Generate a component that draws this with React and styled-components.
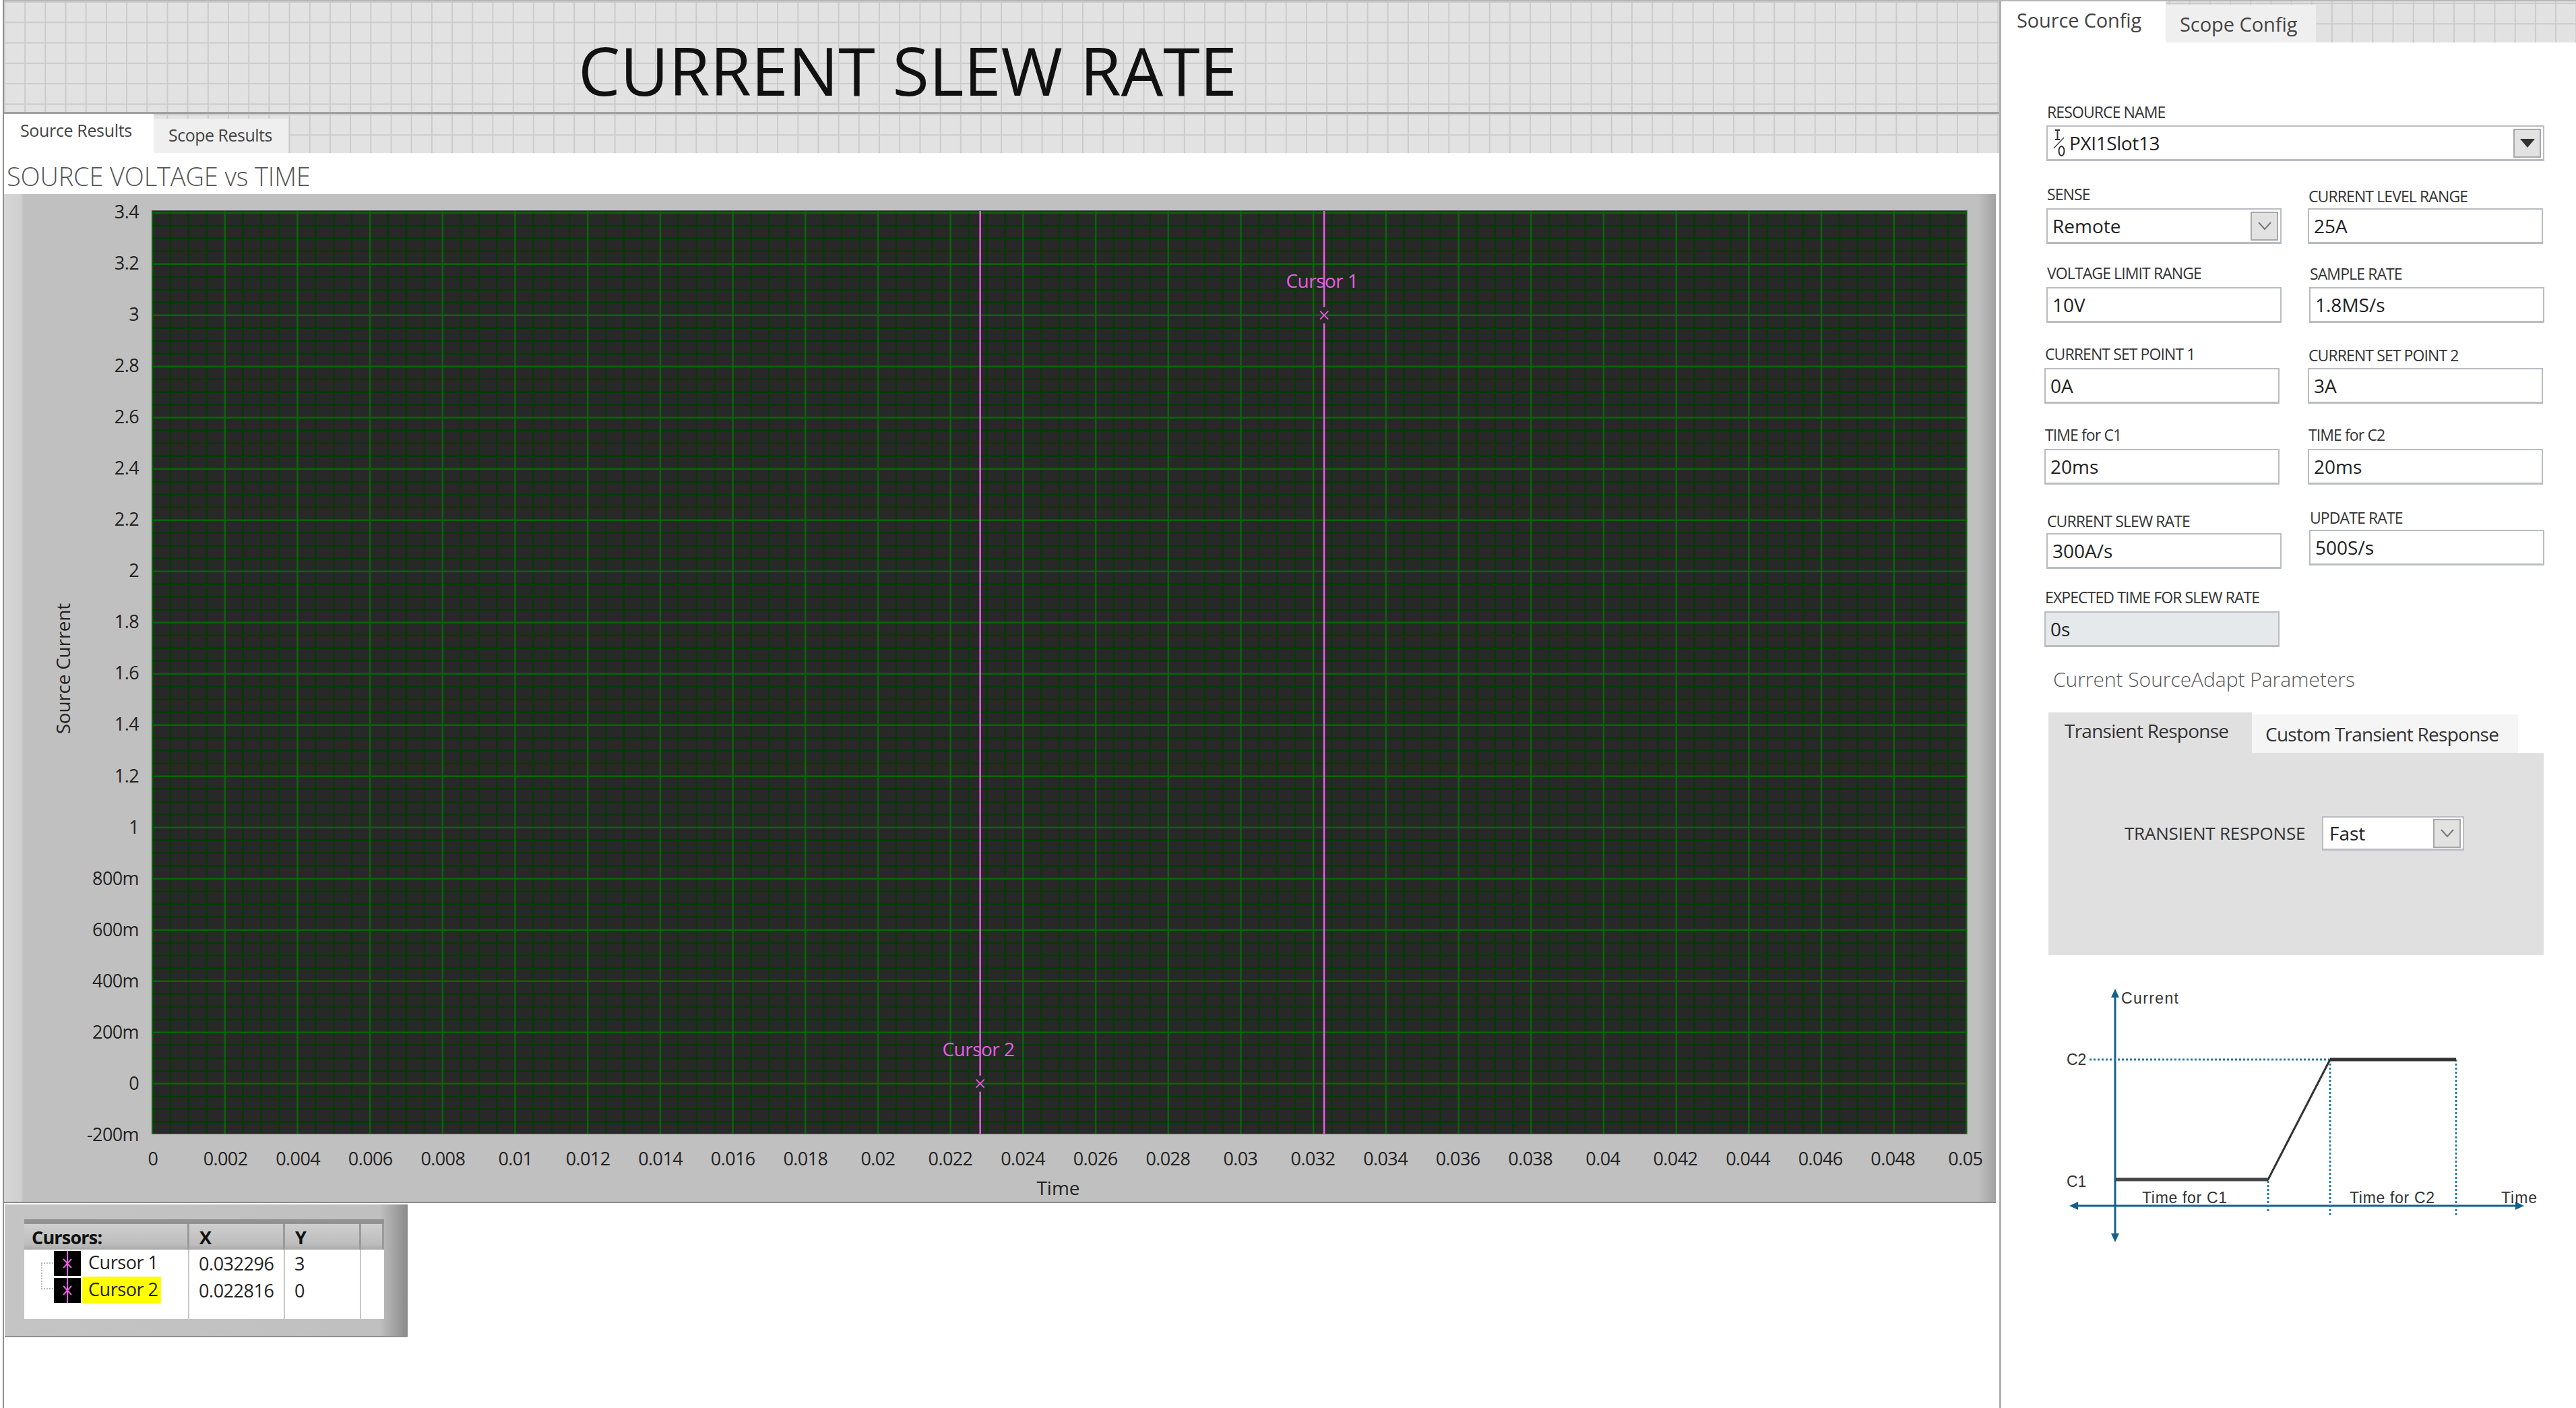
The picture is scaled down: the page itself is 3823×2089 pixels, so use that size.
import React from 'react'
import styled, { createGlobalStyle } from 'styled-components'

const GlobalStyle = createGlobalStyle`
    html, body {
        margin: 0;
        padding: 0;
        background: #fff;
    }
    body {
        font-family: "Open Sans", "Liberation Sans", sans-serif;
        color: #222;
        overflow: hidden;
    }
`

const gridPaper = `
    background-color: #e2e2e2;
    background-image:
        linear-gradient(90deg, #cbcbcb 2px, transparent 2px),
        linear-gradient(#cbcbcb 2px, transparent 2px);
    background-size: 30.2px 30.3px;
`

const Page = styled.div`
    width: 3823px;
    height: 2089px;
    display: flex;
    background: #fff;
    overflow: hidden;
`

const LeftPane = styled.div`
    width: 2961px;
    margin-left: 4px;
    border-left: 2px solid #8f8f8f;
    display: flex;
    flex-direction: column;
`

const Divider = styled.div`
    width: 3px;
    background: #b0b0b0;
`

const RightPane = styled.div`
    width: 853px;
    display: flex;
    flex-direction: column;
`

const Header = styled.div`
    border-top: 2px solid #b5b5b5;
    border-bottom: 3px solid #a0a0a0;
    box-sizing: border-box;
    height: 169px;
    display: flex;
    align-items: center;
    padding: 40px 0 0 852px;
    ${gridPaper}
`

const Title = styled.h1`
    margin: 0;
    font-size: 99px;
    font-weight: 400;
    letter-spacing: 0;
    line-height: 110px;
    color: #111;
`

const TabStrip = styled.div`
    height: ${props => props.$h}px;
    display: flex;
    align-items: flex-end;
    ${gridPaper}
`

const Tab = styled.div`
    width: ${props => props.$w}px;
    height: ${props => props.$active ? props.$h : props.$h - props.$drop}px;
    box-sizing: border-box;
    padding-left: ${props => props.$pl}px;
    padding-bottom: ${props => props.$pb}px;
    display: flex;
    align-items: center;
    font-size: ${props => props.$fs}px;
    letter-spacing: ${props => props.$ls}px;
    color: #444;
    background: ${props => props.$active ? '#fff' : '#efefef'};
`

const ChartHeading = styled.div`
    height: 61px;
    box-sizing: border-box;
    padding: 7px 0 0 4px;
    display: flex;
    align-items: center;
    font-size: 38px;
    font-weight: 300;
    letter-spacing: -0.15px;
    color: #555;
`

const GraphPanel = styled.div`
    height: 1497px;
    margin-right: 5px;
    box-sizing: border-box;
    border-bottom: 2px solid #8a8a8a;
    display: grid;
    grid-template-columns: 219px 2695px 1fr;
    grid-template-rows: 24px 1371px 1fr;
    background:
        linear-gradient(90deg, transparent 2930px, #a2a2a2 100%),
        linear-gradient(90deg, #d6d6d6 0, #d0d0d0 25px, #c0c0c0 29px);
`

const LeftAxis = styled.div`
    grid-column: 1;
    grid-row: 2;
    display: flex;
    min-height: 0;
`

const AxisTitle = styled.div`
    margin-left: 72px;
    margin-bottom: 10px;
    width: 30px;
    align-self: center;
    writing-mode: vertical-rl;
    transform: rotate(180deg);
    text-align: center;
    font-size: 28px;
    letter-spacing: -0.25px;
    line-height: 30px;
    color: #222;
`

const YTicks = styled.div`
    flex: 1;
    margin-top: -13px;
    margin-bottom: -15px;
    padding-right: 19px;
    display: flex;
    flex-direction: column;
    justify-content: space-between;
    align-items: flex-end;
`

const TickLabel = styled.div`
    height: 30px;
    line-height: 30px;
    font-size: 27px;
    letter-spacing: -0.6px;
    color: #222;
    text-align: ${props => props.$center ? 'center' : 'right'};
    width: ${props => props.$center ? '100px' : 'auto'};
`

const Plot = styled.div`
    grid-column: 2;
    grid-row: 2;
    position: relative;
    background: #282828;
    border-top: 1px solid #555;
    box-sizing: border-box;
    border-right: 1px solid #777;
    border-bottom: 1px solid #777;
    overflow: hidden;
`

const PlotSvg = styled.svg`
    display: block;
    width: 2695px;
    height: 1371px;
`

const CursorTag = styled.div`
    position: absolute;
    transform: translate(-50%, -50%);
    font-size: 28px;
    letter-spacing: -0.5px;
    line-height: 30px;
    white-space: nowrap;
    color: #e55ee0;
`

const BottomAxis = styled.div`
    grid-column: 2;
    grid-row: 3;
    display: flex;
    flex-direction: column;
    align-items: center;
`

const XTicks = styled.div`
    align-self: stretch;
    margin: 21px -47px 0 -48px;
    display: flex;
    justify-content: space-between;
`

const XTitle = styled.div`
    margin-top: 13px;
    margin-right: 4px;
    font-size: 28px;
    line-height: 30px;
    color: #222;
`

const CursorPanel = styled.div`
    width: 598px;
    height: 197px;
    margin: 2px 0 0 1px;
    box-sizing: border-box;
    padding: 29px 35px 27px 29px;
    background: linear-gradient(90deg, #c4c4c4 0, #c0c0c0 93%, #8a8a8a 100%);
    border-bottom: 2px solid #909090;
`

const CursorTable = styled.div`
    height: 141px;
    display: grid;
    grid-template-columns: 245px 142px 113px 34px;
    grid-template-rows: 38px 1fr;
    background: #fff;
    box-shadow: 0 -7px 0 #929292;
`

const HeadCell = styled.div`
    box-sizing: border-box;
    padding-left: ${props => props.$pl}px;
    border-right: 3px solid #9a9a9a;
    display: flex;
    align-items: center;
    font-size: 27px;
    font-weight: 700;
    letter-spacing: -0.8px;
    color: #111;
    background: linear-gradient(#cfcfcf, #bcbcbc 80%, #a8a8a8);
`

const BodyCol = styled.div`
    box-sizing: border-box;
    padding: 0 0 0 ${props => props.$pl}px;
    border-right: ${props => props.$last ? 'none' : '2px solid #c8c8c8'};
    display: flex;
    flex-direction: column;
    position: relative;
`

const CursorRow = styled.div`
    height: 40px;
    display: flex;
    align-items: center;
    font-size: 27px;
    letter-spacing: -0.45px;
    color: #222;
`

const Swatch = styled.svg`
    width: 40px;
    height: 37px;
    flex: none;
    background: #000;
`

const CursorName = styled.span`
    margin-left: 2px;
    padding: 0 4px 0 9px;
    height: 40px;
    line-height: 38px;
    background: ${props => props.$on ? '#ffff00' : 'transparent'};
`

const TreeLine = styled.div`
    position: absolute;
    left: 25px;
    top: 19px;
    width: 18px;
    height: 40px;
    box-sizing: border-box;
    border: 2px dotted #bbb;
    border-right: none;
`

const ConfigTabs = styled(TabStrip)`
    background-position: 7px 2px;
    border-top: 2px solid #b5b5b5;
    box-sizing: content-box;
`

const FormGrid = styled.div`
    margin: 92px 0 0 64px;
    display: grid;
    grid-template-columns: 391px 351px;
    grid-template-rows: 84px 123px 117px 120px 120px 125px 116px;
    align-items: end;
`

const Field = styled.div`
    grid-column: ${props => props.$span ? '1 / 3' : 'auto'};
    margin-left: ${props => props.$dx || 0}px;
    margin-bottom: ${props => props.$lift || 0}px;
`

const FieldLabel = styled.div`
    height: 22px;
    line-height: 22px;
    margin-bottom: ${props => props.$gap}px;
    padding-left: 1px;
    font-size: 23px;
    letter-spacing: -0.9px;
    white-space: nowrap;
    color: #333;
`

const InputBox = styled.div`
    width: ${props => props.$wide ? '739px' : '349px'};
    height: 53px;
    box-sizing: border-box;
    border: 2px solid #b9bcc0;
    border-bottom-width: 3px;
    padding-left: 7px;
    display: flex;
    align-items: center;
    justify-content: space-between;
    font-size: 28px;
    letter-spacing: 0;
    color: #222;
    background: ${props => props.$readonly ? '#e6e9ec' : '#fff'};
`

const DropButton = styled.div`
    width: 41px;
    height: 43px;
    margin-right: 3px;
    box-sizing: border-box;
    border: 2px solid #a8a8a8;
    flex: none;
    display: flex;
    align-items: center;
    justify-content: center;
    background: #e2e2e2;
`

const ResourceValue = styled.div`
    display: flex;
    align-items: center;
    letter-spacing: -0.4px;
`

const IoMark = styled.svg`
    width: 20px;
    height: 44px;
    margin-right: 5px;
`

const SubHeading = styled.div`
    margin: 28px 0 0 77px;
    height: 40px;
    line-height: 40px;
    font-size: 30px;
    font-weight: 300;
    letter-spacing: -0.05px;
    color: #555;
`

const TransientBlock = styled.div`
    margin: 29px 0 0 70px;
    width: 735px;
`

const TransientTabs = styled.div`
    width: 697px;
    height: 60px;
    display: flex;
    align-items: flex-end;
`

const TransientTab = styled.div`
    height: ${props => props.$active ? 60 : 57}px;
    width: ${props => props.$w}px;
    box-sizing: border-box;
    padding: 0 0 ${props => props.$active ? 6 : 0}px ${props => props.$pl}px;
    display: flex;
    align-items: center;
    font-size: 28px;
    letter-spacing: -0.75px;
    color: #333;
    white-space: nowrap;
    background: ${props => props.$active ? '#e0e0e0' : '#f5f5f5'};
`

const TransientBody = styled.div`
    height: 300px;
    box-sizing: border-box;
    padding: 94px 0 0 113px;
    display: flex;
    align-items: flex-start;
    background: #e0e0e0;
`

const InlineLabel = styled.div`
    width: 293px;
    height: 51px;
    line-height: 51px;
    font-size: 26px;
    letter-spacing: -0.2px;
    color: #333;
    white-space: nowrap;
`

const SmallSelect = styled(InputBox)`
    width: 211px;
    height: 51px;
    padding-left: 9px;
`

const Diagram = styled.svg`
    display: block;
    margin-top: 23px;
    width: 853px;
    height: 420px;
`

const AXIS = '#12618a'
const DOTS = '#2b7a9e'

const yLabels = ['3.4', '3.2', '3', '2.8', '2.6', '2.4', '2.2', '2', '1.8', '1.6', '1.4', '1.2', '1', '800m', '600m', '400m', '200m', '0', '-200m']
const xLabels = ['0', '0.002', '0.004', '0.006', '0.008', '0.01', '0.012', '0.014', '0.016', '0.018', '0.02', '0.022', '0.024', '0.026', '0.028', '0.03', '0.032', '0.034', '0.036', '0.038', '0.04', '0.042', '0.044', '0.046', '0.048', '0.05']

const plotX = (t) => 1 + t / 0.002 * 107.7
const plotY = (v) => 1294.7 - v * 380

const cursors = [
    { name: 'Cursor 1', t: 0.032296, v: 3, shown: '0.032296', tagX: 1962, tagY: 415 },
    { name: 'Cursor 2', t: 0.022816, v: 0, shown: '0.022816', tagX: 1452, tagY: 1555 },
]

const PlotGrid = () => {
    const minorV = []
    const majorV = []
    for (let i = 0; i <= 100; i++) {
        const x = 1 + i * 26.925
        if (i % 4 === 0) majorV.push(x)
        else minorV.push(x)
    }
    const minorH = []
    const majorH = []
    for (let i = 0; i <= 72; i++) {
        const y = plotY(3.4) + i * 19
        if (i % 4 === 0) majorH.push(y)
        else minorH.push(y)
    }
    return (
        <PlotSvg viewBox="0 0 2695 1371">
            <g stroke="#043a04" strokeWidth="2.5">
                {minorV.map(x => <line key={x} x1={x} x2={x} y1="0" y2="1371" />)}
                {minorH.map(y => <line key={y} x1="0" x2="2695" y1={y} y2={y} />)}
            </g>
            <g stroke="#066606" strokeWidth="2.5">
                {majorV.map(x => <line key={x} x1={x} x2={x} y1="0" y2="1371" />)}
                {majorH.map(y => <line key={y} x1="0" x2="2695" y1={y} y2={y} />)}
            </g>
            {cursors.map(c => {
                const x = plotX(c.t)
                const y = plotY(c.v)
                return (
                    <g key={c.name} stroke="#e85fe0">
                        <line x1={x} x2={x} y1="0" y2={y - 12} strokeWidth="2.5" />
                        <line x1={x} x2={x} y1={y + 12} y2="1371" strokeWidth="2.5" />
                        <path d={`M${x - 6} ${y - 6}L${x + 6} ${y + 6}M${x + 6} ${y - 6}L${x - 6} ${y + 6}`} strokeWidth="1.8" fill="none" />
                    </g>
                )
            })}
        </PlotSvg>
    )
}

const ChevronButton = () => (
    <DropButton>
        <svg width="20" height="14" viewBox="0 0 20 14">
            <path d="M1 2l9 10 9-10" fill="none" stroke="#777" strokeWidth="2" />
        </svg>
    </DropButton>
)

const TextField = ({ label, value, gap = 8, dx, lift, readonly }) => (
    <Field $dx={dx} $lift={lift}>
        <FieldLabel $gap={gap}>{label}</FieldLabel>
        <InputBox $readonly={readonly}>{value}</InputBox>
    </Field>
)

const CurrentDiagram = () => (
    <Diagram viewBox="2970 1440 853 420" fontFamily="'Liberation Sans', Arial, sans-serif" fontSize="23" fill="#333">
        <line x1="3139" x2="3139" y1="1475" y2="1836" stroke={AXIS} strokeWidth="3" />
        <polygon points="3139,1467 3133,1480 3145,1480" fill={AXIS} />
        <polygon points="3139,1843 3133,1830 3145,1830" fill={AXIS} />
        <line x1="3080" x2="3738" y1="1789" y2="1789" stroke={AXIS} strokeWidth="3" />
        <polygon points="3071,1789 3084,1783 3084,1795" fill={AXIS} />
        <polygon points="3746,1789 3733,1783 3733,1795" fill={AXIS} />
        <g stroke={DOTS} strokeWidth="3" strokeDasharray="3 3" fill="none">
            <line x1="3101" x2="3458" y1="1572" y2="1572" />
            <line x1="3366" x2="3366" y1="1752" y2="1800" />
            <line x1="3458" x2="3458" y1="1572" y2="1803" />
            <line x1="3645" x2="3645" y1="1572" y2="1803" />
        </g>
        <path d="M3140 1750H3366L3458 1572" fill="none" stroke="#333" strokeWidth="3" />
        <line x1="3140" x2="3366" y1="1750" y2="1750" stroke="#444" strokeWidth="5" />
        <line x1="3458" x2="3645" y1="1572" y2="1572" stroke="#333" strokeWidth="5" />
        <text x="3148" y="1489" textLength="85">Current</text>
        <text x="3067" y="1580">C2</text>
        <text x="3067" y="1761">C1</text>
        <text x="3179" y="1785" textLength="126">Time for C1</text>
        <text x="3487" y="1785" textLength="126">Time for C2</text>
        <text x="3712" y="1785" textLength="53">Time</text>
    </Diagram>
)

const App = () => (
    <Page>
        <GlobalStyle />
        <LeftPane>
            <Header>
                <Title>CURRENT SLEW RATE</Title>
            </Header>
            <TabStrip $h={58}>
                <Tab $active $w={222} $h={58} $pl={24} $pb={10} $fs={25} $ls={-0.35}>Source Results</Tab>
                <Tab $w={200} $h={58} $drop={7} $pl={22} $pb={3} $fs={25} $ls={-0.5}>Scope Results</Tab>
            </TabStrip>
            <ChartHeading>SOURCE VOLTAGE vs TIME</ChartHeading>
            <GraphPanel>
                <LeftAxis>
                    <AxisTitle>Source Current</AxisTitle>
                    <YTicks>
                        {yLabels.map(l => <TickLabel key={l}>{l}</TickLabel>)}
                    </YTicks>
                </LeftAxis>
                <Plot>
                    <PlotGrid />
                    {cursors.map(c => (
                        <CursorTag key={c.name} style={{ left: c.tagX - 225, top: c.tagY - 312 }}>{c.name}</CursorTag>
                    ))}
                </Plot>
                <BottomAxis>
                    <XTicks>
                        {xLabels.map(l => <TickLabel key={l} $center>{l}</TickLabel>)}
                    </XTicks>
                    <XTitle>Time</XTitle>
                </BottomAxis>
            </GraphPanel>
            <CursorPanel>
                <CursorTable>
                    <HeadCell $pl={11}>Cursors:</HeadCell>
                    <HeadCell $pl={15}>X</HeadCell>
                    <HeadCell $pl={15}>Y</HeadCell>
                    <HeadCell $pl={0} />
                    <BodyCol $pl={44}>
                        <TreeLine />
                        {cursors.map((c, i) => (
                            <CursorRow key={c.name}>
                                <Swatch viewBox="0 0 40 37">
                                    <path d="M20 0V37M14 12L26 25M26 12L14 25" stroke="#e85fe0" strokeWidth="2" fill="none" />
                                </Swatch>
                                <CursorName $on={i === 1}>{c.name}</CursorName>
                            </CursorRow>
                        ))}
                    </BodyCol>
                    <BodyCol $pl={14}>
                        {cursors.map(c => <CursorRow key={c.name}>{c.shown}</CursorRow>)}
                    </BodyCol>
                    <BodyCol $pl={14}>
                        {cursors.map(c => <CursorRow key={c.name}>{c.v}</CursorRow>)}
                    </BodyCol>
                    <BodyCol $last $pl={0} />
                </CursorTable>
            </CursorPanel>
        </LeftPane>
        <Divider />
        <RightPane>
            <ConfigTabs $h={61}>
                <Tab $active $w={244} $h={61} $pl={23} $pb={6} $fs={29} $ls={-0.15}>Source Config</Tab>
                <Tab $w={223} $h={61} $drop={5} $pl={21} $pb={0} $fs={29} $ls={-0.05}>Scope Config</Tab>
            </ConfigTabs>
            <FormGrid>
                <Field $span $dx={3}>
                    <FieldLabel $gap={9}>RESOURCE NAME</FieldLabel>
                    <InputBox $wide>
                        <ResourceValue>
                            <IoMark viewBox="0 0 20 44">
                                <path d="M4 3h7M7.500 3v14M4 17h7" stroke="#333" strokeWidth="2" fill="none" />
                                <path d="M2 30L17 14" stroke="#444" strokeWidth="1.5" fill="none" />
                                <ellipse cx="13.500" cy="34" rx="4" ry="7" stroke="#333" strokeWidth="2" fill="none" />
                            </IoMark>
                            PXI1Slot13
                        </ResourceValue>
                        <DropButton>
                            <svg width="22" height="14" viewBox="0 0 22 14">
                                <path d="M0 1h22L11 14z" fill="#333" />
                            </svg>
                        </DropButton>
                    </InputBox>
                </Field>
                <Field $dx={3}>
                    <FieldLabel $gap={10}>SENSE</FieldLabel>
                    <InputBox>
                        Remote
                        <ChevronButton />
                    </InputBox>
                </Field>
                <TextField label="CURRENT LEVEL RANGE" value="25A" gap={7} />
                <TextField label="VOLTAGE LIMIT RANGE" value="10V" gap={10} dx={3} />
                <TextField label="SAMPLE RATE" value="1.8MS/s" gap={9} dx={2} />
                <TextField label="CURRENT SET POINT 1" value="0A" gap={10} />
                <TextField label="CURRENT SET POINT 2" value="3A" gap={8} />
                <TextField label="TIME for C1" value="20ms" gap={10} />
                <TextField label="TIME for C2" value="20ms" gap={10} />
                <TextField label="CURRENT SLEW RATE" value="300A/s" gap={7} dx={3} />
                <TextField label="UPDATE RATE" value="500S/s" gap={7} dx={2} lift={5} />
                <TextField label="EXPECTED TIME FOR SLEW RATE" value="0s" gap={10} readonly />
            </FormGrid>
            <SubHeading>Current SourceAdapt Parameters</SubHeading>
            <TransientBlock>
                <TransientTabs>
                    <TransientTab $active $w={302} $pl={24}>Transient Response</TransientTab>
                    <TransientTab $w={395} $pl={20}>Custom Transient Response</TransientTab>
                </TransientTabs>
                <TransientBody>
                    <InlineLabel>TRANSIENT RESPONSE</InlineLabel>
                    <SmallSelect>
                        Fast
                        <ChevronButton />
                    </SmallSelect>
                </TransientBody>
            </TransientBlock>
            <CurrentDiagram />
        </RightPane>
    </Page>
)

export default App
